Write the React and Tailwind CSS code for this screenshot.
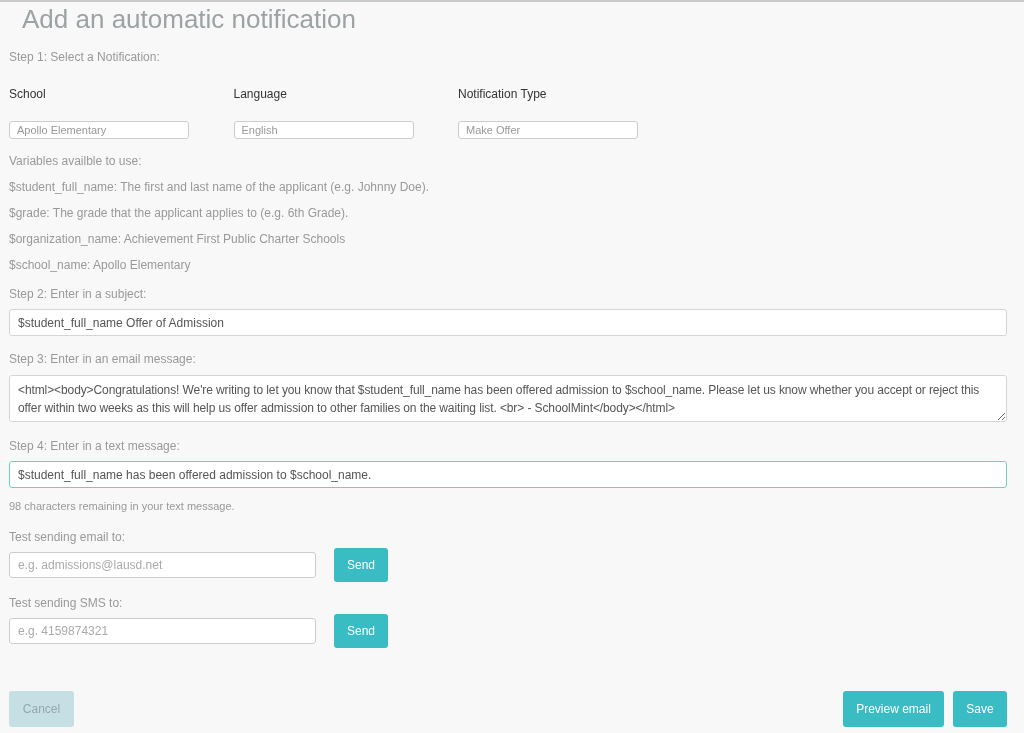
import { useState } from "react";

const variables = [
    "$student_full_name: The first and last name of the applicant (e.g. Johnny Doe).",
    "$grade: The grade that the applicant applies to (e.g. 6th Grade).",
    "$organization_name: Achievement First Public Charter Schools",
    "$school_name: Apollo Elementary",
];

export default function App() {
    const [subject, setSubject] = useState("$student_full_name Offer of Admission");
    const [email, setEmail] = useState(
        "<html><body>Congratulations! We're writing to let you know that $student_full_name has been offered admission to $school_name. Please let us know whether you accept or reject this offer within two weeks as this will help us offer admission to other families on the waiting list. <br> - SchoolMint</body></html>"
    );
    const [sms, setSms] = useState("$student_full_name has been offered admission to $school_name.");

    return (
        <div
            className="min-h-screen bg-[#f8f8f8] border-t-2 border-[#c9c9c9] pl-[9px] pr-[17px] text-[12px] text-[#999]"
            style={{ fontFamily: '"Liberation Sans", Arial, sans-serif' }}
        >
            {/* Header */}
            <h1 className="mt-[2px] pl-[13px] text-[26px] leading-[30px] text-[#9da2a4] font-normal">
                Add an automatic notification
            </h1>

            {/* Step 1 */}
            <p className="mt-[15px] leading-[16px]">Step 1: Select a Notification:</p>

            <div className="mt-[21px] flex">
                {[
                    ["School", "Apollo Elementary"],
                    ["Language", "English"],
                    ["Notification Type", "Make Offer"],
                ].map(([label, value]) => (
                    <div key={label} className="w-[224.5px]">
                        <div className="leading-[16px] text-[#333]">{label}</div>
                        <input
                            readOnly
                            placeholder={value}
                            className="mt-[19px] block w-[180px] h-[18px] px-[7px] bg-white border border-[#ccc] rounded-[3px] text-[11px] placeholder-[#999] outline-none"
                        />
                    </div>
                ))}
            </div>

            {/* Variables */}
            <div className="mt-[9px]">
                <p className="leading-[26px]">Variables availble to use:</p>
                {variables.map((v) => (
                    <p key={v} className="leading-[26px]">{v}</p>
                ))}
            </div>

            {/* Step 2 */}
            <p className="mt-[8px] leading-[16px]">Step 2: Enter in a subject:</p>
            <input
                value={subject}
                onChange={(e) => setSubject(e.target.value)}
                className="mt-[7px] block w-full h-[27px] px-[8px] bg-white border border-[#d5d5d5] rounded-[3px] text-[12px] text-[#555] outline-none"
            />

            {/* Step 3 */}
            <p className="mt-[15px] leading-[16px]">Step 3: Enter in an email message:</p>
            <textarea
                value={email}
                onChange={(e) => setEmail(e.target.value)}
                className="mt-[8px] block w-full h-[47px] px-[8px] py-[5px] bg-white border border-[#d5d5d5] rounded-[3px] text-[12px] leading-[18px] tracking-[-0.1px] text-[#555] outline-none"
            />

            {/* Step 4 */}
            <p className="mt-[16px] leading-[16px]">Step 4: Enter in a text message:</p>
            <input
                value={sms}
                onChange={(e) => setSms(e.target.value)}
                className="mt-[7px] block w-full h-[27px] px-[8px] bg-white border border-[#6dd2bd] rounded-[3px] text-[12px] text-[#555] outline-none"
            />
            <p className="mt-[11px] text-[11px] leading-[14px]">
                {160 - 62} characters remaining in your text message.
            </p>

            {/* Test email */}
            <p className="mt-[16px] leading-[16px]">Test sending email to:</p>
            <div className="mt-[3px] flex items-center gap-[18px]">
                <input
                    placeholder="e.g. admissions@lausd.net"
                    className="block w-[307px] h-[26px] px-[8px] bg-white border border-[#ccc] rounded-[3px] text-[12px] placeholder-[#aaa] outline-none"
                />
                <button className="w-[54px] h-[34px] rounded-[3px] bg-[#39bcc3] text-white text-[12px]">
                    Send
                </button>
            </div>

            {/* Test SMS */}
            <p className="mt-[13px] leading-[16px]">Test sending SMS to:</p>
            <div className="mt-[3px] flex items-center gap-[18px]">
                <input
                    placeholder="e.g. 4159874321"
                    className="block w-[307px] h-[26px] px-[8px] bg-white border border-[#ccc] rounded-[3px] text-[12px] placeholder-[#aaa] outline-none"
                />
                <button className="w-[54px] h-[34px] rounded-[3px] bg-[#39bcc3] text-white text-[12px]">
                    Send
                </button>
            </div>

            {/* Footer actions */}
            <div className="mt-[43px] flex justify-between items-center">
                <button className="w-[65px] h-[36px] rounded-[3px] bg-[#c6dfe5] text-[#93a9af] text-[12px]">
                    Cancel
                </button>
                <div className="flex gap-[9px]">
                    <button className="w-[101px] h-[36px] rounded-[3px] bg-[#39bcc3] text-white text-[12px]">
                        Preview email
                    </button>
                    <button className="w-[54px] h-[36px] rounded-[3px] bg-[#39bcc3] text-white text-[12px]">
                        Save
                    </button>
                </div>
            </div>
        </div>
    );
}
